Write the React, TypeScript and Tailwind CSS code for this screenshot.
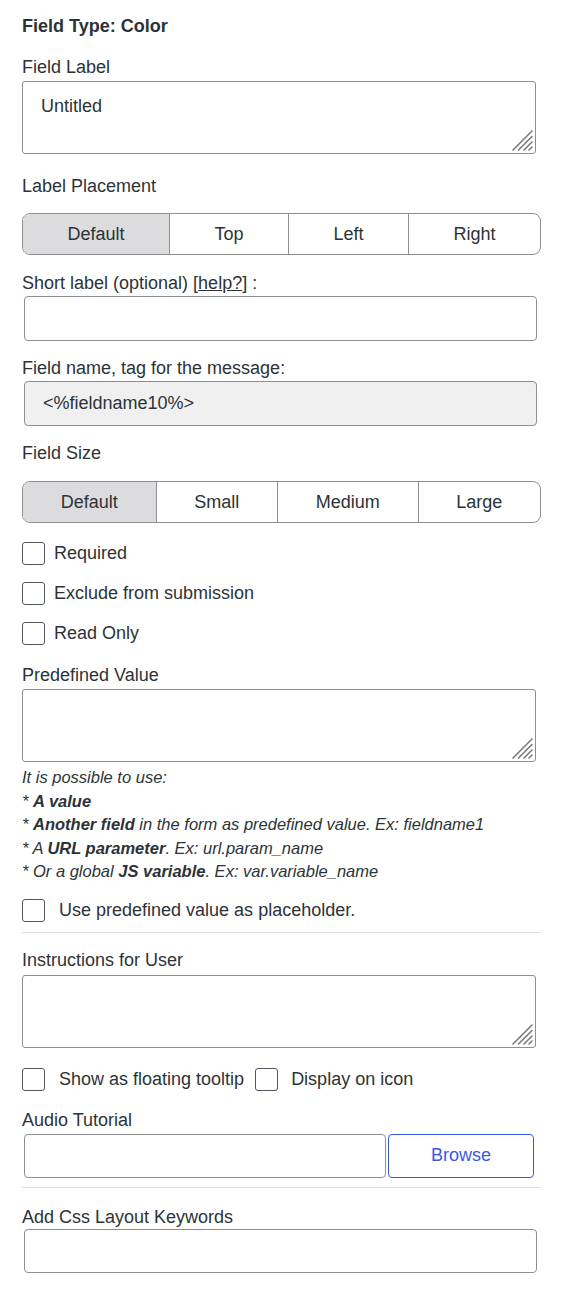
import React from 'react';

function Grip() {
  return (
    <svg
      className="absolute right-[3px] bottom-[3px] pointer-events-none"
      width="22"
      height="22"
      viewBox="0 0 22 22"
    >
      <g stroke="#7a7a7a" strokeWidth="1.6" strokeLinecap="round">
        <line x1="2" y1="21" x2="21" y2="2" />
        <line x1="7.5" y1="21" x2="21" y2="7.5" />
        <line x1="13" y1="21" x2="21" y2="13" />
        <line x1="18" y1="21" x2="21" y2="18" />
      </g>
    </svg>
  );
}

function Area({ value, className }: { value?: string; className?: string }) {
  return (
    <div className={`relative w-[514px] h-[73px] ${className ?? ''}`}>
      <textarea
        defaultValue={value}
        className="block w-full h-full resize-none rounded-[3px] border border-[#8c8f94] bg-white px-[18px] pt-[12px] text-[18px] leading-6 text-[#2c3338] outline-none"
      />
      <Grip />
    </div>
  );
}

function Input({ value, gray, className }: { value?: string; gray?: boolean; className?: string }) {
  return (
    <input
      readOnly
      value={value ?? ''}
      className={`block rounded-[4px] border border-[#8c8f94] px-[18px] text-[18px] text-[#2c3338] outline-none ${
        gray ? 'bg-[#f0f0f1]' : 'bg-white'
      } ${className ?? ''}`}
    />
  );
}

function Segmented({ items, className }: { items: string[]; className?: string }) {
  return (
    <div className={`flex w-[519px] h-[42px] rounded-[8px] border border-[#8c8f94] overflow-hidden ${className ?? ''}`}>
      {items.map((it, i) => (
        <button
          key={it}
          className={`flex-auto px-0 text-[18px] text-[#2c3338] ${i > 0 ? 'border-l border-[#8c8f94]' : 'bg-[#dcdcde]'}`}
        >
          {it}
        </button>
      ))}
    </div>
  );
}

function Box() {
  return <span className="block w-[23px] h-[23px] shrink-0 rounded-[3px] border border-[#50575e] bg-white" />;
}

function Label({ children, className }: { children: React.ReactNode; className?: string }) {
  return <div className={`leading-6 ${className ?? ''}`}>{children}</div>;
}

export default function App() {
  return (
    <div className="min-h-[1292px] bg-white pl-[22px] pr-[25px] pt-[14px] text-[18px] text-[#2c3338] font-['Liberation_Sans',Arial,sans-serif]">
      <div className="font-bold leading-6">Field Type: Color</div>

      <Label className="mt-[17px]">Field Label</Label>
      <Area value="Untitled" className="mt-[2px]" />

      <Label className="mt-[20px]">Label Placement</Label>
      <Segmented items={['Default', 'Top', 'Left', 'Right']} className="mt-[15px]" />

      <Label className="mt-[16px]">
        Short label (optional) [<span className="underline">help?</span>] :
      </Label>
      <Input className="mt-[1px] ml-[2px] w-[513px] h-[45px]" />

      <Label className="mt-[15px]">Field name, tag for the message:</Label>
      <Input gray value="<%fieldname10%>" className="mt-[1px] ml-[2px] w-[513px] h-[45px]" />

      <Label className="mt-[15px]">Field Size</Label>
      <Segmented items={['Default', 'Small', 'Medium', 'Large']} className="mt-[16px]" />

      <div className="mt-[19px] flex flex-col gap-[17px]">
        {['Required', 'Exclude from submission', 'Read Only'].map((t) => (
          <div key={t} className="flex h-[23px] items-center gap-[9px]">
            <Box />
            <span>{t}</span>
          </div>
        ))}
      </div>

      <Label className="mt-[18px]">Predefined Value</Label>
      <Area className="mt-[2px]" />

      <div className="mt-[4px] text-[16.5px] italic leading-[23.5px]">
        <div>It is possible to use:</div>
        <div>
          * <b>A value</b>
        </div>
        <div>
          * <b>Another field</b> in the form as predefined value. Ex: fieldname1
        </div>
        <div>
          * A <b>URL parameter</b>. Ex: url.param_name
        </div>
        <div>
          * Or a global <b>JS variable</b>. Ex: var.variable_name
        </div>
      </div>

      <div className="mt-[15px] flex h-[23px] items-center gap-[14px]">
        <Box />
        <span>Use predefined value as placeholder.</span>
      </div>

      <div className="mt-[10px] h-px w-[519px] bg-[#dcdcde]" />

      <Label className="mt-[15px]">Instructions for User</Label>
      <Area className="mt-[3px]" />

      <div className="mt-[20px] flex h-[23px] items-center">
        <Box />
        <span className="ml-[14px]">Show as floating tooltip</span>
        <span className="ml-[11px]">
          <Box />
        </span>
        <span className="ml-[13px]">Display on icon</span>
      </div>

      <Label className="mt-[17px]">Audio Tutorial</Label>
      <div className="mt-[2px] ml-[2px] flex gap-[2px]">
        <Input className="w-[362px] h-[44px]" />
        <button className="h-[44px] w-[146px] rounded-[4px] border border-[#3858e9] bg-white text-[18px] text-[#3858e9]">
          Browse
        </button>
      </div>

      <div className="mt-[9px] h-px w-[519px] bg-[#dcdcde]" />

      <Label className="mt-[17px]">Add Css Layout Keywords</Label>
      <Input className="ml-[2px] w-[513px] h-[44px]" />
    </div>
  );
}
